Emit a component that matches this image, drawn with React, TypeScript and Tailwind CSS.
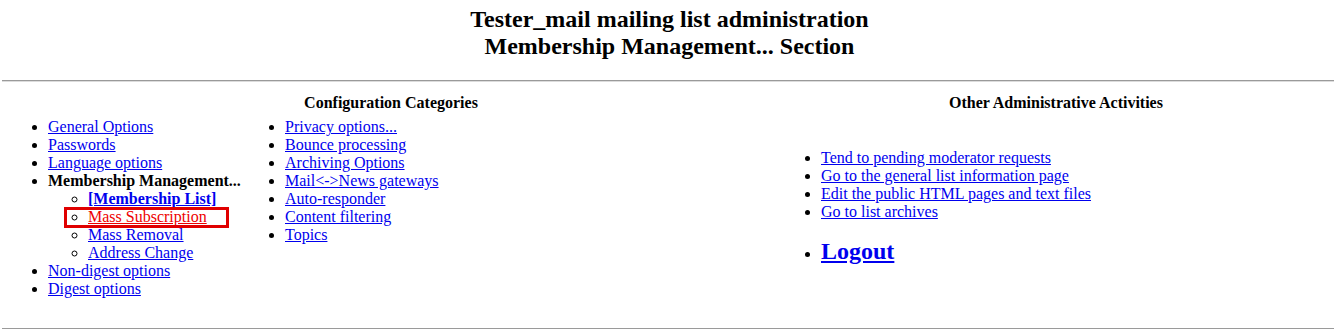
import React from 'react';

const linkCls = 'text-[#0000ee] underline';

const leftCol1 = ['General Options', 'Passwords', 'Language options'];
const subItems = ['Mass Removal', 'Address Change'];
const leftCol1After = ['Non-digest options', 'Digest options'];
const leftCol2 = [
  'Privacy options...',
  'Bounce processing',
  'Archiving Options',
  'Mail<->News gateways',
  'Auto-responder',
  'Content filtering',
  'Topics',
];
const otherLinks = [
  'Tend to pending moderator requests',
  'Go to the general list information page',
  'Edit the public HTML pages and text files',
  'Go to list archives',
];

const App = () => {
  return (
    <div className="w-[1339px] h-[329px] overflow-hidden bg-white text-black text-[16px] leading-[18px] font-['Liberation_Serif','Times_New_Roman',serif]">
      {/* Title */}
      <div className="pt-[6px] text-center">
        <h2 className="text-[24px] leading-[27px] font-bold">Tester_mail mailing list administration</h2>
        <h2 className="text-[24px] leading-[27px] font-bold">Membership Management... Section</h2>
      </div>

      <div className="mt-[20px] ml-[2px] mr-[5px] h-[2px] border-t border-[#9a9a9a] border-b border-b-[#dcdcdc]"></div>

      <div className="flex px-[8px] pt-[12px] h-[246px]">
        {/* Configuration Categories */}
        <div className="w-[773px]">
          <div className="text-center font-bold pr-[7px]">Configuration Categories</div>
          <div className="flex mt-[6px]">
            <ul className="w-[237px] pl-[40px] list-disc">
              {leftCol1.map((t) => (
                <li key={t}>
                  <a href="#" className={linkCls}>{t}</a>
                </li>
              ))}
              <li className="font-bold">
                Membership Management...
                <ul className="pl-[40px] font-normal list-[circle]">
                  <li>
                    <a href="#" className={`${linkCls} font-bold`}>[Membership List]</a>
                  </li>
                  <li className="relative">
                    <a href="#" className="text-[#ee0000] underline">Mass Subscription</a>
                    <span className="absolute left-[-24px] top-[-1px] w-[165px] h-[21px] border-[3px] border-[#e00000]"></span>
                  </li>
                  {subItems.map((t) => (
                    <li key={t}>
                      <a href="#" className={linkCls}>{t}</a>
                    </li>
                  ))}
                </ul>
              </li>
              {leftCol1After.map((t) => (
                <li key={t}>
                  <a href="#" className={linkCls}>{t}</a>
                </li>
              ))}
            </ul>
            <ul className="pl-[40px] list-disc">
              {leftCol2.map((t) => (
                <li key={t}>
                  <a href="#" className={linkCls}>{t}</a>
                </li>
              ))}
            </ul>
          </div>
        </div>

        {/* Other Administrative Activities */}
        <div className="flex-1">
          <div className="text-center font-bold">Other Administrative Activities</div>
          <ul className="mt-[37px] pl-[40px] list-disc">
            {otherLinks.map((t) => (
              <li key={t}>
                <a href="#" className={linkCls}>{t}</a>
              </li>
            ))}
          </ul>
          <ul className="mt-[17px] pl-[40px] list-disc">
            <li className="leading-[27px]">
              <a href="#" className={`${linkCls} text-[24px] font-bold`}>Logout</a>
            </li>
          </ul>
        </div>
      </div>

      <div className="ml-[2px] mr-[5px] h-[2px] border-t border-[#9a9a9a] border-b border-b-[#dcdcdc]"></div>
    </div>
  );
};

export default App;
